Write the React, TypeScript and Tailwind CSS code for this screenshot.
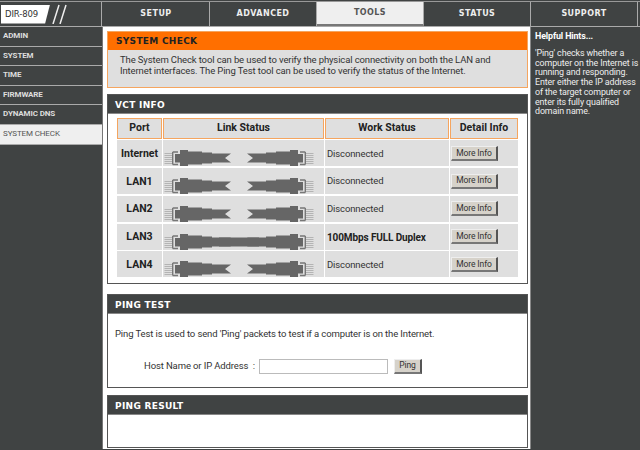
const body = "font-['Roboto','Noto_Sans',sans-serif]";
const heavy = "font-['DejaVu_Sans',sans-serif] font-bold";

function Half() {
  return (
    <g>
      <path d="M0.5 3.5H8M0.5 5.5H8M0.5 7.5H8M0.5 9.5H8M0.5 11.5H8M0.5 13.5H8" stroke="#b4b4b4" strokeWidth="1" />
      <path d="M8.7 2V14.5M8.7 2H14M8.7 14.5H14" stroke="#777" strokeWidth="1.4" fill="none" />
      <path d="M11 4H16V0H24V1.5H38V2.5H48V3.5H67L61 8L67 12.5H48V13.5H38V14.5H24V16H16V12.5H11Z" fill="#666" />
    </g>
  );
}

function Cable({ connected }: { connected: boolean }) {
  return (
    <svg width="150" height="16" viewBox="0 0 150 16" className="block">
      <Half />
      <g transform="translate(150 0) scale(-1 1)">
        <Half />
      </g>
      {connected && <rect x="55" y="3.5" width="40" height="9" fill="#666" />}
    </svg>
  );
}

function Btn({ children, className }: { children: string; className: string }) {
  return (
    <button className={`${className} shrink-0 whitespace-nowrap bg-[#d6d2ca] border-r-2 border-b-2 border-t border-l border-t-[#eee] border-l-[#eee] border-r-[#555] border-b-[#777] text-[8.5px] text-[#333] flex items-center justify-center leading-none`}>
      {children}
    </button>
  );
}

function Panel({ title, className, children }: { title: string; className: string; children?: React.ReactNode }) {
  return (
    <section className={`${className} border border-[#555] bg-white`}>
      <h2 className={`${heavy} h-[19px] bg-[#404343] border-b border-[#888] pl-[7px] text-[9px] leading-[20px] tracking-[0.3px] text-white`}>{title}</h2>
      {children}
    </section>
  );
}

const tabs = ["SETUP", "ADVANCED", "TOOLS", "STATUS", "SUPPORT"];
const side = ["ADMIN", "SYSTEM", "TIME", "FIRMWARE", "DYNAMIC DNS", "SYSTEM CHECK"];
const rows = [
  ["Internet", "Disconnected"],
  ["LAN1", "Disconnected"],
  ["LAN2", "Disconnected"],
  ["LAN3", "100Mbps FULL Duplex"],
  ["LAN4", "Disconnected"],
];
const headers = ["Port", "Link Status", "Work Status", "Detail Info"];

export default function App() {
  return (
    <div className={`${body} w-[640px] h-[450px] overflow-hidden bg-[#404343] text-[9.5px] tracking-[-0.12px] text-[#333]`}>
      <header className="h-[26px] flex border-t border-t-[#999] border-b border-b-[#aaa] mt-px">
        <div className="w-[102px] border-r border-[#aaa] flex items-center gap-[1px] pl-px">
          <div className={`${heavy} w-[49px] h-[19px] bg-white text-[#333] text-[8.5px] font-normal leading-[19px] pl-[4px] [clip-path:polygon(0_0,100%_0,90%_100%,0_100%)]`}>DIR-809</div>
          <svg width="16" height="20" viewBox="0 0 16 20">
            <path d="M8 1L2 20M15 1L9 20" stroke="#eee" strokeWidth="1.5" />
          </svg>
        </div>
        <nav className="flex-1 flex pl-px">
          {tabs.map((t) => (
            <div key={t} className={`${heavy} h-full w-[107px] border-r border-[#aaa] flex items-center justify-center text-[8px] tracking-[0.45px] ${t === "TOOLS" ? "bg-[#efefef] text-[#555] border-b-2 border-b-[#777]" : "text-[#eee]"}`}>
              {t}
            </div>
          ))}
        </nav>
      </header>

      <div className="flex h-[422px]">
        <aside className="w-[103px] border-r border-[#777]">
          {side.map((s) => (
            <div key={s} className={`h-[19.6px] border-b border-[#aaa] pl-[3px] text-[8px] leading-[18px] ${s === "SYSTEM CHECK" ? "bg-[#efefef] text-[#555]" : "text-[#ddd] font-bold"}`}>
              {s}
            </div>
          ))}
        </aside>

        <main className="w-[427px] bg-white pl-[4px] pt-[4px]">
          <section className="w-[421px] h-[57px] border border-[#f5a55f] bg-[#dfdfdf]">
            <h1 className={`${heavy} h-[18px] bg-[#ff6f00] pl-[8px] text-[9px] leading-[18px] tracking-[0.3px] text-[#222]`}>SYSTEM CHECK</h1>
            <p className="pl-[12px] pt-[5px] leading-[10.5px] whitespace-nowrap text-[#333]">
              The System Check tool can be used to verify the physical connectivity on both the LAN and<br />
              Internet interfaces. The Ping Test tool can be used to verify the status of the Internet.
            </p>
          </section>

          <Panel title="VCT INFO" className="mt-[6px] w-[421px] h-[190px]">
            <div className="mt-[4px] ml-[9px] grid grid-cols-[45px_161px_124px_68px] gap-x-px gap-y-[1.75px]">
              {headers.map((h) => (
                <div key={h} className="h-[20.5px] border border-[#f5a55f] bg-[#dfdfdf] flex items-center justify-center font-bold text-[10.5px] tracking-normal text-[#222]">
                  {h}
                </div>
              ))}
              {rows.map(([port, status]) => (
                <div key={port} className="contents">
                  <div className="h-[26px] pt-px bg-[#dfdfdf] flex items-center justify-center font-bold text-[10.5px] tracking-normal text-[#222]">{port}</div>
                  <div className="h-[26px] bg-[#dfdfdf] flex items-end pl-px">
                    <Cable connected={port === "LAN3"} />
                  </div>
                  <div className={`h-[26px] pt-px bg-[#dfdfdf] flex items-center pl-[2px] ${port === "LAN3" ? "font-bold text-[#222] text-[10px]" : ""}`}>{status}</div>
                  <div className="h-[26px] bg-[#dfdfdf] flex items-center pl-px">
                    <Btn className="w-[47px] h-[15px]">More Info</Btn>
                  </div>
                </div>
              ))}
            </div>
          </Panel>

          <Panel title="PING TEST" className="mt-[10px] w-[421px] h-[94px]">
            <p className="pl-[7px] pt-[13px] leading-[14px]">Ping Test is used to send 'Ping' packets to test if a computer is on the Internet.</p>
            <div className="mt-[17px] flex items-center h-[16px] pl-[36px]">
              <span className="w-[115px] shrink-0 whitespace-pre">Host Name or IP Address  :</span>
              <input className="w-[129px] h-[15px] border border-[#bbb] bg-white" />
              <Btn className="ml-[6px] w-[28px] h-[15px]">Ping</Btn>
            </div>
          </Panel>

          <Panel title="PING RESULT" className="mt-[7px] w-[421px] h-[53px]" />
        </main>

        <aside className="w-[110px] border-l border-[#888] pl-[4px] pt-[2px] text-[#eee] text-[8.9px] leading-[9.7px]">
          <h3 className="font-bold leading-[14px] text-white">Helpful Hints...</h3>
          <p className="mt-[6px] whitespace-nowrap">
            'Ping' checks whether a<br />computer on the Internet is<br />running and responding.<br />Enter either the IP address<br />of the target computer or<br />enter its fully qualified<br />domain name.
          </p>
        </aside>
      </div>
    </div>
  );
}
